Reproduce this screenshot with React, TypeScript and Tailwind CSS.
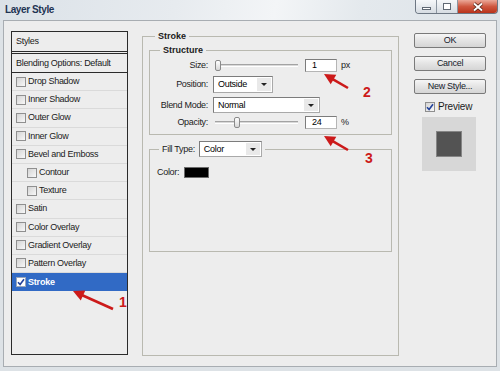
import type { ReactNode } from "react";

const RED = "#cc1a1a";

//List of layer effects shown on the left
const effects = [
  { name: "Drop Shadow" },
  { name: "Inner Shadow" },
  { name: "Outer Glow" },
  { name: "Inner Glow" },
  { name: "Bevel and Emboss" },
  { name: "Contour", indent: true },
  { name: "Texture", indent: true },
  { name: "Satin" },
  { name: "Color Overlay" },
  { name: "Gradient Overlay" },
  { name: "Pattern Overlay" },
  { name: "Stroke", selected: true },
];

const Checkbox = ({ checked = false, white = false }: { checked?: boolean; white?: boolean }) => (
  <span
    className={
      white
        ? "flex h-[10px] w-[10px] shrink-0 items-center justify-center border border-[#9aa6b8] bg-white"
        : "flex h-[10px] w-[10px] shrink-0 items-center justify-center border border-[#8f8f8f] bg-[linear-gradient(135deg,#d4d4d4,#f8f8f8)]"
    }
  >
    {checked && (
      <svg width="8" height="8" viewBox="0 0 8 8">
        <path d="M1 4.2 L3.1 6.5 L7 1.2" fill="none" stroke="#22429b" strokeWidth="1.6" />
      </svg>
    )}
  </span>
);

const Slider = ({ at }: { at: number }) => (
  <div className="relative ml-[7px] h-[13px] w-[83px]">
    <div className="absolute left-0 right-0 top-[5px] h-[3px] border-t border-[#a3a3a3] border-b border-b-white bg-[#d9d9d9]" />
    <div
      className="absolute top-[1px] h-[11px] w-[6px] rounded-[2px] border border-[#8a8a8a] bg-[linear-gradient(#ffffff,#d6d6d6)]"
      style={{ left: at }}
    />
  </div>
);

const Input = ({ value }: { value: string }) => (
  <div className="ml-[7px] flex h-[13px] w-[32px] items-center border border-[#7c7c7c] border-r-[#b5b5b5] border-b-[#b5b5b5] bg-white pl-[6px] text-black">
    {value}
  </div>
);

const Select = ({ value, width, height = 17 }: { value: string; width: number; height?: number }) => (
  <div
    className="flex items-stretch border border-[#7c7c7c] border-r-[#a9a9a9] border-b-[#a9a9a9] bg-white text-black"
    style={{ width, height }}
  >
    <span className="flex flex-1 items-center pl-[4px]">{value}</span>
    <span className="m-[1px] flex w-[14px] items-center justify-center bg-[#e9e9e9]">
      <span className="h-0 w-0 border-x-[3px] border-t-[3px] border-x-transparent border-t-[#222]" />
    </span>
  </div>
);

const Button = ({ children }: { children: ReactNode }) => (
  <div className="flex h-[15px] w-[72px] items-center justify-center rounded-[2px] border border-[#7a7a7a] bg-[linear-gradient(#f6f6f6,#e4e4e4_50%,#d5d5d5)] text-[#141a2a]">
    {children}
  </div>
);

const Arrow = ({ tip, tail }: { tip: [number, number]; tail: [number, number] }) => {
  const dx = tip[0] - tail[0];
  const dy = tip[1] - tail[1];
  const len = Math.hypot(dx, dy);
  const ux = dx / len;
  const uy = dy / len;
  const hl = 11;
  const hw = 5.5;
  const bx = tip[0] - ux * hl;
  const by = tip[1] - uy * hl;
  const pts = `${tip[0]},${tip[1]} ${bx - uy * hw},${by + ux * hw} ${bx + uy * hw},${by - ux * hw}`;
  return (
    <g>
      <line x1={tail[0]} y1={tail[1]} x2={bx + ux * 2} y2={by + uy * 2} stroke={RED} strokeWidth={2.6} />
      <polygon points={pts} fill={RED} />
    </g>
  );
};

const App = () => {
  return (
    <div className="relative h-[371px] w-[500px] overflow-hidden bg-[#dde2e6] font-['Liberation_Sans',Arial,sans-serif] text-[9px] leading-none tracking-[-0.3px] text-[#1b1b1b]">
      {/* title bar */}
      <div className="flex h-[20px] items-start justify-between bg-[linear-gradient(100deg,#dbe2e8_0%,#e7ebef_35%,#f3f5f7_55%,#e4e9ed_72%,#dde3e8_100%)]">
        <span className="ml-[5px] mt-[5px] text-[10px] font-bold tracking-[-0.4px] text-[#1e3454]">Layer Style</span>
        <div className="mr-[2px] flex h-[14px] overflow-hidden rounded-b-[4px] border border-t-0 border-[#6d7783]">
          <div className="flex w-[21px] items-center justify-center border-r border-[#8c96a1] bg-[linear-gradient(#f6f8fa,#d6dce2)]">
            <span className="mt-[4px] h-[3px] w-[9px] border border-[#5f6873] bg-white" />
          </div>
          <div className="flex w-[21px] items-center justify-center border-r border-[#8c96a1] bg-[linear-gradient(#f6f8fa,#d6dce2)]">
            <span className="h-[7px] w-[8px] border border-[#5f6873] bg-white" />
          </div>
          <div className="flex w-[39px] items-center justify-center bg-[linear-gradient(#eba999,#cf5840_50%,#b9331c)]">
            <svg width="12" height="10" viewBox="0 0 12 10">
              <path d="M2 1.5 L10 8.5 M10 1.5 L2 8.5" stroke="#4a1d12" strokeWidth="3.4" />
              <path d="M2 1.5 L10 8.5 M10 1.5 L2 8.5" stroke="#ffffff" strokeWidth="2" />
            </svg>
          </div>
        </div>
      </div>

      {/* dialog body */}
      <div className="mx-[3px] flex h-[347px] border border-[#a8adb2] bg-[#ededed]">
        {/* styles list */}
        <div className="ml-[7px] mt-[10px] h-[324px] w-[117px] border border-[#2b2b2b] bg-[#ededed]">
          <div className="flex h-[20px] items-center border-b border-[#2b2b2b] pl-[4px]">Styles</div>
          <div className="mt-[1px] flex h-[20px] items-center border-y border-[#2b2b2b] pl-[4px]">
            Blending Options: Default
          </div>
          {effects.map((e, index) => (
            <div
              key={index}
              className={
                e.selected
                  ? "flex h-[18.2px] items-center bg-[#316ac5] pl-[4px] font-bold tracking-[-0.2px] text-white"
                  : e.indent
                  ? "flex h-[18.2px] items-center border-b border-[#dadada] pl-[15px]"
                  : "flex h-[18.2px] items-center border-b border-[#dadada] pl-[4px]"
              }
            >
              <Checkbox checked={e.selected} white={e.selected} />
              <span className="ml-[2px]">{e.name}</span>
            </div>
          ))}
        </div>

        {/* stroke settings */}
        <fieldset className="ml-[14px] mt-[9px] h-[326px] w-[257px] border border-[#b9b9b0] px-[6px]">
          <legend className="ml-[6px] px-[3px] font-bold leading-[12px] tracking-normal">Stroke</legend>

          <fieldset className="mt-[2px] border border-[#b9b9b0] pb-[5px]">
            <legend className="ml-[10px] px-[3px] font-bold leading-[12px] tracking-normal">Structure</legend>
            <div className="mt-[3px] flex h-[13px] items-center">
              <span className="w-[58px] text-right">Size:</span>
              <Slider at={0} />
              <Input value="1" />
              <span className="ml-[4px]">px</span>
            </div>
            <div className="mt-[4px] flex items-center">
              <span className="w-[58px] text-right">Position:</span>
              <span className="ml-[5px]">
                <Select value="Outside" width={60} />
              </span>
            </div>
            <div className="mt-[4px] flex items-center">
              <span className="w-[58px] text-right">Blend Mode:</span>
              <span className="ml-[5px]">
                <Select value="Normal" width={107} height={16} />
              </span>
            </div>
            <div className="mt-[3px] flex h-[13px] items-center">
              <span className="w-[58px] text-right">Opacity:</span>
              <Slider at={19} />
              <Input value="24" />
              <span className="ml-[4px]">%</span>
            </div>
          </fieldset>

          <fieldset className="mt-[6px] h-[111px] border border-[#b9b9b0]">
            <legend className="ml-[9px] flex items-center px-[3px]">
              <span>Fill Type:</span>
              <span className="ml-[4px]">
                <Select value="Color" width={63} height={16} />
              </span>
            </legend>
            <div className="ml-[7px] mt-[10px] flex items-center">
              <span>Color:</span>
              <span className="ml-[5px] h-[11px] w-[25px] border border-[#6b6b6b] bg-black" />
            </div>
          </fieldset>
        </fieldset>

        {/* buttons and preview */}
        <div className="ml-[15px] mt-[12px] flex w-[72px] flex-col">
          <div className="flex flex-col gap-[8px]">
            <Button>OK</Button>
            <Button>Cancel</Button>
            <Button>New Style...</Button>
          </div>
          <div className="ml-[11px] mt-[8px] flex items-center">
            <Checkbox checked />
            <span className="ml-[3px] text-[10px] tracking-[-0.2px]">Preview</span>
          </div>
          <div className="ml-[8px] mt-[5px] flex h-[54px] w-[54px] items-center justify-center bg-[#d7d7d7]">
            <div className="h-[26px] w-[26px] border border-[#858585] bg-[#535353]" />
          </div>
        </div>
      </div>

      {/* red annotations */}
      <svg className="pointer-events-none absolute left-0 top-0" width="500" height="371">
        <Arrow tip={[73, 291]} tail={[113, 309]} />
        <Arrow tip={[324, 74]} tail={[348, 88]} />
        <Arrow tip={[324, 136]} tail={[348, 150]} />
      </svg>
      <span className="absolute left-[119px] top-[295px] text-[14px] font-bold tracking-normal text-[#cc1a1a]">1</span>
      <span className="absolute left-[363px] top-[85px] text-[14px] font-bold tracking-normal text-[#cc1a1a]">2</span>
      <span className="absolute left-[365px] top-[151px] text-[14px] font-bold tracking-normal text-[#cc1a1a]">3</span>
    </div>
  );
};

export default App;
